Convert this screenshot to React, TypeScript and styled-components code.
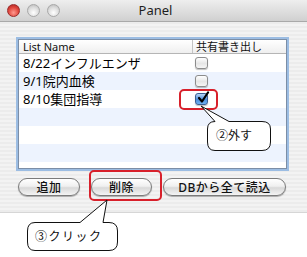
import styled, { createGlobalStyle } from "styled-components";

const GlobalStyle = createGlobalStyle`
  html, body { margin: 0; padding: 0; background: #ffffff; }
  body { font-family: "Noto Sans", "Noto Sans CJK JP", sans-serif; }
`;

const Page = styled.div`
  position: relative;
  width: 307px;
  height: 257px;
  overflow: hidden;
  background: #ffffff;
`;

const Window = styled.div`
  display: flex;
  flex-direction: column;
  width: 307px;
`;

const TitleBar = styled.div`
  position: relative;
  display: flex;
  align-items: center;
  gap: 7px;
  height: 22px;
  padding-left: 7px;
  box-sizing: border-box;
  background: linear-gradient(#eeeeee, #d0d0d0);
  border-bottom: 1px solid #a9a9a9;
`;

const Light = styled.div<{ $red?: boolean }>`
  width: 13px;
  height: 13px;
  border-radius: 50%;
  box-sizing: border-box;
  border: 1px solid ${(p) => (p.$red ? "#9a2b2b" : "#a8a8a8")};
  background: ${(p) =>
    p.$red
      ? "radial-gradient(circle at 50% 70%, #ff9a90 0%, #e0463c 55%, #a51e1e 100%)"
      : "radial-gradient(circle at 50% 70%, #ffffff 0%, #dcdcdc 55%, #b4b4b4 100%)"};
`;

const Title = styled.div`
  position: absolute;
  left: 0;
  right: 0;
  top: 0;
  line-height: 21px;
  text-align: center;
  font-size: 13px;
  color: #1e1e1e;
  padding-left: 4px;
`;

const Body = styled.div`
  display: flex;
  flex-direction: column;
  gap: 9px;
  padding: 17px 20px 16px 18px;
  height: 191px;
  box-sizing: border-box;
  background: repeating-linear-gradient(#ececec 0px, #ececec 2px, #f3f3f3 2px, #f3f3f3 4px);
  border-bottom: 1px solid #d6d6d6;
`;

const Table = styled.div`
  height: 130px;
  box-sizing: border-box;
  border: 1px solid #7c8ea6;
  box-shadow: 0 0 0 2px #9cbde3;
  background: #ffffff;
  overflow: hidden;
`;

const Row = styled.div<{ $alt?: boolean }>`
  display: grid;
  grid-template-columns: 173px 1fr;
  height: 18px;
  background: ${(p) => (p.$alt ? "#edf3fe" : "#ffffff")};
`;

const HeaderRow = styled.div`
  display: grid;
  grid-template-columns: 173px 1fr;
  height: 14px;
  box-sizing: border-box;
  background: linear-gradient(#ffffff, #efefef);
  border-bottom: 1px solid #b5b5b5;
`;

const HeadCell = styled.div<{ $last?: boolean }>`
  font-size: 11px;
  line-height: 13px;
  color: #111;
  padding-left: ${(p) => (p.$last ? "3px" : "4px")};
  border-left: ${(p) => (p.$last ? "1px solid #c4c4c4" : "none")};
  white-space: nowrap;
`;

const NameCell = styled.div`
  font-size: 13px;
  line-height: 18px;
  color: #000;
  padding-left: 4px;
  white-space: nowrap;
`;

const CheckCell = styled.div`
  display: flex;
  align-items: center;
  padding-left: 3px;
`;

const Box = styled.div<{ $checked?: boolean }>`
  position: relative;
  width: 13px;
  height: 12px;
  border-radius: 3px;
  box-sizing: border-box;
  border: 1px solid ${(p) => (p.$checked ? "#3b5f93" : "#8c8c8c")};
  background: ${(p) =>
    p.$checked
      ? "linear-gradient(#b7d6f6, #4e8fdc 55%, #6fb0f0)"
      : "linear-gradient(#ffffff, #e6e6e6 55%, #f6f6f6)"};
  box-shadow: 0 1px 1px rgba(0, 0, 0, 0.25);
  svg {
    position: absolute;
    left: 1px;
    top: -3px;
  }
`;

const Buttons = styled.div`
  display: flex;
  gap: 11px;
`;

const Button = styled.div<{ $w: number }>`
  width: ${(p) => p.$w}px;
  height: 18px;
  box-sizing: border-box;
  border: 1px solid #7b7b7b;
  border-radius: 9px;
  background: linear-gradient(#ffffff 0%, #f0f0f0 45%, #d9d9d9 55%, #f4f4f4 100%);
  box-shadow: 0 1px 1px rgba(0, 0, 0, 0.3);
  display: flex;
  align-items: center;
  justify-content: center;
  font-size: 12px;
  font-weight: 500;
  color: #111;
  letter-spacing: 0.5px;
`;

const Highlight = styled.div<{ $x: number; $y: number; $w: number; $h: number }>`
  position: absolute;
  left: ${(p) => p.$x}px;
  top: ${(p) => p.$y}px;
  width: ${(p) => p.$w}px;
  height: ${(p) => p.$h}px;
  box-sizing: border-box;
  border: 2px solid #d8202b;
  border-radius: 5px;
`;

const Callout = styled.svg`
  position: absolute;
  left: 0;
  top: 0;
`;

const CalloutText = styled.div<{ $x: number; $y: number; $spacing?: number }>`
  position: absolute;
  left: ${(p) => p.$x}px;
  top: ${(p) => p.$y}px;
  font-size: 12px;
  line-height: 14px;
  color: #111;
  letter-spacing: ${(p) => p.$spacing ?? 0}px;
`;

const names = ["8/22インフルエンザ", "9/1院内血検", "8/10集団指導", "", "", "", "", ""];

export default function App() {
  return (
    <>
      <GlobalStyle />
      <Page>
        <Window>
          <TitleBar>
            <Light $red />
            <Light />
            <Light />
            <Title>Panel</Title>
          </TitleBar>
          <Body>
            <Table>
              <HeaderRow>
                <HeadCell>List Name</HeadCell>
                <HeadCell $last>共有書き出し</HeadCell>
              </HeaderRow>
              {names.map((n, i) => (
                <Row key={i} $alt={i % 2 === 1}>
                  <NameCell>{n}</NameCell>
                  <CheckCell>
                    {i < 3 && (
                      <Box $checked={i === 2}>
                        {i === 2 && (
                          <svg width="13" height="13" viewBox="0 0 13 13">
                            <path d="M2 7 L5 10.5 L11 1.5" fill="none" stroke="#000" strokeWidth="2.2" strokeLinecap="round" strokeLinejoin="round" />
                          </svg>
                        )}
                      </Box>
                    )}
                  </CheckCell>
                </Row>
              ))}
            </Table>
            <Buttons>
              <Button $w={62}>追加</Button>
              <Button $w={61}>削除</Button>
              <Button $w={123}>DBから全て読込</Button>
            </Buttons>
          </Body>
        </Window>

        <Highlight $x={179} $y={89} $w={39} $h={21} />
        <Highlight $x={89} $y={170} $w={73} $h={31} />

        <Callout width="307" height="257" viewBox="0 0 307 257">
          <path
            d="M215 121.5 L201 106 L229 121.5 L262 121.5 Q270.5 121.5 270.5 129 L270.5 142 Q270.5 150.5 262 150.5 L215 150.5 Q207.5 150.5 207.5 142 L207.5 129 Q207.5 121.5 215 121.5 Z"
            fill="#ffffff"
            stroke="#111"
            strokeWidth="1"
          />
          <path
            d="M35 222.5 L80 222.5 L107 200 L103 222.5 L109 222.5 Q117.5 222.5 117.5 231 L117.5 242 Q117.5 250.5 109 250.5 L35 250.5 Q27.5 250.5 27.5 242 L27.5 231 Q27.5 222.5 35 222.5 Z"
            fill="#ffffff"
            stroke="#111"
            strokeWidth="1"
          />
        </Callout>
        <CalloutText $x={216} $y={129}>②外す</CalloutText>
        <CalloutText $x={35} $y={230} $spacing={1.5}>③クリック</CalloutText>
      </Page>
    </>
  );
}
